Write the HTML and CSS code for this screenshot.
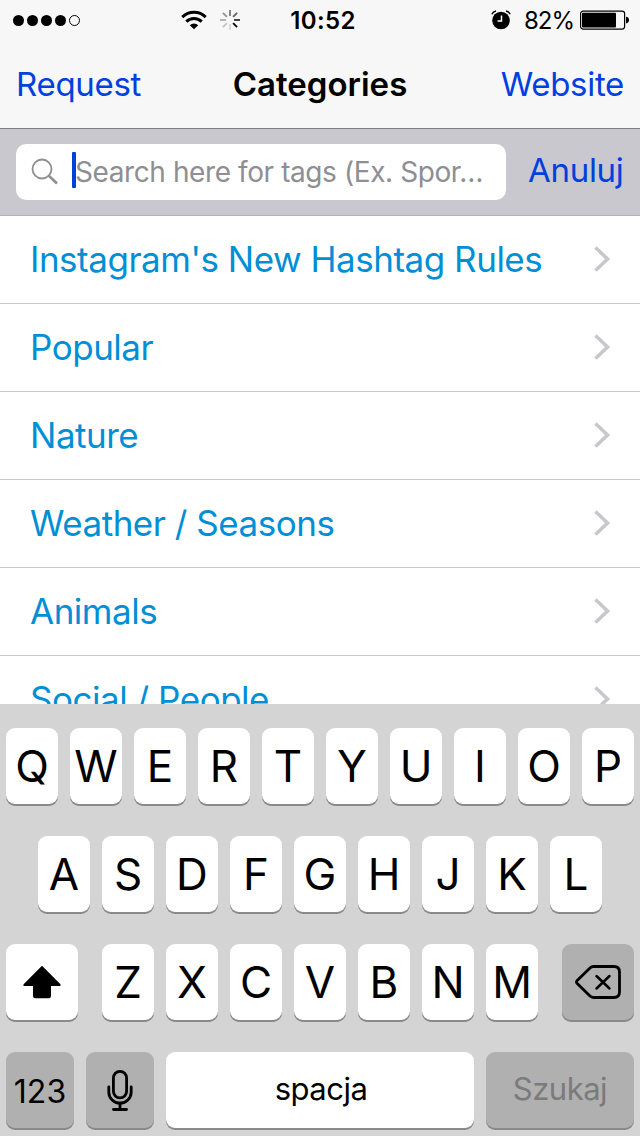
FILE: index.html
```html
<!DOCTYPE html>
<html lang="pl">

<head>
    <meta charset="UTF-8">
    <meta name="viewport" content="width=device-width, initial-scale=1.0">
    <link rel="stylesheet" href="styles.css">
    <title>Categories</title>
</head>

<body>

    <div class="screen">
        <header class="header">
            <div class="status-bar">
                <div class="status-left">
                    <div class="signal">
                        <span class="dot"></span>
                        <span class="dot"></span>
                        <span class="dot"></span>
                        <span class="dot"></span>
                        <span class="dot dot-empty"></span>
                    </div>
                    <svg class="icon-wifi" width="26" height="20" viewBox="0 0 26 20">
                        <g fill="none" stroke="#000" stroke-width="3">
                            <path d="M1.3 7.1a16.6 16.6 0 0 1 23.4 0" />
                            <path d="M5.3 11.6a11 11 0 0 1 15.4 0" />
                        </g>
                        <path d="M8.8 15.3a6 6 0 0 1 8.4 0L13 19.3z" />
                    </svg>
                    <svg class="icon-spinner" width="20" height="20" viewBox="0 0 20 20" stroke="#000" stroke-width="1.8">
                        <path d="M10 0v6" opacity=".5" />
                        <path d="M17.1 2.9l-4 4" opacity=".6" />
                        <path d="M20 10h-6" opacity=".8" />
                        <path d="M17.1 17.1l-4-4" />
                        <path d="M10 20v-6" opacity=".12" />
                        <path d="M2.9 17.1l4-4" opacity=".2" />
                        <path d="M0 10h6" opacity=".3" />
                        <path d="M2.9 2.9l4 4" opacity=".4" />
                    </svg>
                </div>
                <div class="time">10:52</div>
                <div class="status-right">
                    <svg class="icon-alarm" width="20" height="20" viewBox="0 0 20 20">
                        <circle cx="10" cy="10.5" r="8.8" />
                        <path d="M.8 4.2Q2 1.6 5 1M19.2 4.2Q18 1.6 15 1" fill="none" stroke="#000" stroke-width="1.4" />
                        <path d="M10.5 5.5v5.5H6.5" fill="none" stroke="#fff" stroke-width="1.5" />
                    </svg>
                    <span class="battery-text">82%</span>
                    <svg class="icon-battery" width="50" height="20" viewBox="0 0 50 20">
                        <rect x=".6" y="1.1" width="44" height="18" rx="2.5" fill="none" stroke="#000" stroke-width="1.2" />
                        <rect x="2" y="2.8" width="34" height="14.8" rx="1" />
                        <path d="M46 6.8q3 .3 3 3.3t-3 3.3z" />
                    </svg>
                </div>
            </div>
            <div class="nav-bar">
                <a class="nav-link nav-request">Request</a>
                <h1 class="nav-title">Categories</h1>
                <a class="nav-link nav-website">Website</a>
            </div>
        </header>

        <div class="search-bar">
            <div class="search-field">
                <svg class="icon-search" width="28" height="28" viewBox="0 0 28 28" fill="none" stroke="#8e8e93">
                    <circle cx="11" cy="11" r="9.5" stroke-width="1.8" />
                    <path d="M17.8 17.8l8.2 7.7" stroke-width="2.6" />
                </svg>
                <span class="cursor"></span>
                <span class="placeholder">Search here for tags (Ex. Spor…</span>
            </div>
            <a class="cancel">Anuluj</a>
        </div>

        <ul class="categories">
            <li class="category">
                <span class="category-name">Instagram's New Hashtag Rules</span>
                <svg class="chevron" width="18" height="28" viewBox="0 0 18 28"><path d="M2.5 2.5L14.5 14l-12 11.5" /></svg>
            </li>
            <li class="category">
                <span class="category-name">Popular</span>
                <svg class="chevron" width="18" height="28" viewBox="0 0 18 28"><path d="M2.5 2.5L14.5 14l-12 11.5" /></svg>
            </li>
            <li class="category">
                <span class="category-name">Nature</span>
                <svg class="chevron" width="18" height="28" viewBox="0 0 18 28"><path d="M2.5 2.5L14.5 14l-12 11.5" /></svg>
            </li>
            <li class="category">
                <span class="category-name">Weather / Seasons</span>
                <svg class="chevron" width="18" height="28" viewBox="0 0 18 28"><path d="M2.5 2.5L14.5 14l-12 11.5" /></svg>
            </li>
            <li class="category">
                <span class="category-name">Animals</span>
                <svg class="chevron" width="18" height="28" viewBox="0 0 18 28"><path d="M2.5 2.5L14.5 14l-12 11.5" /></svg>
            </li>
            <li class="category">
                <span class="category-name">Social / People</span>
                <svg class="chevron" width="18" height="28" viewBox="0 0 18 28"><path d="M2.5 2.5L14.5 14l-12 11.5" /></svg>
            </li>
        </ul>

        <div class="keyboard">
            <div class="key-row">
                <div class="key">Q</div>
                <div class="key">W</div>
                <div class="key">E</div>
                <div class="key">R</div>
                <div class="key">T</div>
                <div class="key">Y</div>
                <div class="key">U</div>
                <div class="key">I</div>
                <div class="key">O</div>
                <div class="key">P</div>
            </div>
            <div class="key-row">
                <div class="key">A</div>
                <div class="key">S</div>
                <div class="key">D</div>
                <div class="key">F</div>
                <div class="key">G</div>
                <div class="key">H</div>
                <div class="key">J</div>
                <div class="key">K</div>
                <div class="key">L</div>
            </div>
            <div class="key-row">
                <div class="key key-shift">
                    <svg width="38" height="34" viewBox="0 0 38 34">
                        <path d="M19 .8L37.2 19q1.2 2-1 2H28v10q0 2.2-2.2 2.2H12.2Q10 33.2 10 31V21H1.8q-2.2 0-1-2z" />
                    </svg>
                </div>
                <div class="key">Z</div>
                <div class="key">X</div>
                <div class="key">C</div>
                <div class="key">V</div>
                <div class="key">B</div>
                <div class="key">N</div>
                <div class="key">M</div>
                <div class="key key-dark key-delete">
                    <svg width="46" height="34" viewBox="0 0 46 34" fill="none" stroke="#000" stroke-linecap="round" stroke-linejoin="round">
                        <path d="M18.5 1.5H39Q44.5 1.5 44.5 7v20q0 5.500-5.500 5.500H18.5q-2 0-3.500-1.400L2.200 18.600q-1.400-1.600 0-3.200L15 2.900q1.500-1.400 3.500-1.400z" stroke-width="2.8" />
                        <path d="M21.500 11l13 12.500M34.500 11l-13 12.500" stroke-width="2.5" />
                    </svg>
                </div>
            </div>
            <div class="key-row">
                <div class="key key-dark key-small key-numbers">123</div>
                <div class="key key-dark key-small">
                    <svg width="26" height="42" viewBox="0 0 26 42" fill="none" stroke="#000" stroke-width="2.8" stroke-linecap="round">
                        <rect x="6.4" y="2.4" width="13.2" height="26.5" rx="6.6" />
                        <path d="M1.800 18v5a11.200 11.200 0 0 0 22.400 0v-5M13 34v6M6.500 40.500h13" />
                    </svg>
                </div>
                <div class="key key-space">spacja</div>
                <div class="key key-dark key-search">Szukaj</div>
            </div>
        </div>
    </div>

</body>

</html>
```
FILE: styles.css
```css
* {
    box-sizing: border-box;
}

body {
    margin: 0;
    font-family: Inter, "Liberation Sans", sans-serif;
    color: #000;
    background-color: #fff;
}

.screen {
    display: flex;
    flex-direction: column;
    width: 640px;
    height: 1136px;
    overflow: hidden;
}

/* Status bar + nav */
.header {
    height: 129px;
    background-color: #f7f7f7;
    border-bottom: 1px solid #7f7f83;
}

.status-bar {
    display: grid;
    grid-template-columns: 1fr auto 1fr;
    align-items: center;
    height: 40px;
    padding: 0 10px 0 13px;
}

.status-left,
.status-right,
.signal {
    display: flex;
    align-items: center;
}

.status-right {
    justify-content: flex-end;
}

.signal {
    gap: 3px;
}

.dot {
    width: 11px;
    height: 11px;
    border-radius: 50%;
    background-color: #000;
}

.dot-empty {
    background-color: transparent;
    border: 1px solid #000;
}

.icon-wifi {
    margin-left: 101px;
}

.icon-spinner {
    margin-left: 13px;
}

.time {
    padding: 1px 0 0 3px;
    font-size: 24px;
    font-weight: 600;
    letter-spacing: 0.4px;
}

.battery-text {
    margin: 0 6px 0 13px;
    padding-top: 1px;
    font-size: 24px;
    letter-spacing: -1px;
}

.nav-bar {
    display: grid;
    grid-template-columns: 1fr auto 1fr;
    align-items: center;
    height: 88px;
    padding: 0 16px;
}

.nav-link,
.cancel {
    font-size: 33px;
    letter-spacing: -0.3px;
    color: #0040dd;
}

.nav-website {
    text-align: right;
}

.nav-title {
    margin: 0;
    font-size: 33px;
    font-weight: 600;
}

/* Search */
.search-bar {
    display: flex;
    align-items: center;
    height: 87px;
    padding: 0 16px;
    background-color: #c9c8ce;
    border-bottom: 1px solid #b2b2b7;
}

.search-field {
    display: flex;
    flex: none;
    align-items: center;
    width: 490px;
    height: 56px;
    padding-left: 15px;
    background-color: #fff;
    border-radius: 10px;
}

.cursor {
    width: 4px;
    height: 36px;
    margin: 0 -1px 4px 13px;
    border-radius: 1px;
    background-color: #0040dd;
}

.placeholder {
    padding-bottom: 1px;
    font-size: 28px;
    letter-spacing: -0.41px;
    color: #8e8e93;
    white-space: nowrap;
}

.cancel {
    margin-left: 22px;
    padding-bottom: 4px;
}

/* List */
.categories {
    flex: none;
    height: 488px;
    margin: 0;
    padding: 0;
    overflow: hidden;
    list-style: none;
}

.category {
    display: flex;
    align-items: center;
    justify-content: space-between;
    height: 88px;
    padding: 0 29px 2px 30px;
    border-bottom: 1px solid #c8c7cc;
}

.category-name {
    font-size: 35px;
    letter-spacing: -0.48px;
    color: #008fd5;
    white-space: nowrap;
}

.chevron {
    fill: none;
    stroke: #c7c7cc;
    stroke-width: 3.6;
}

/* Keyboard */
.keyboard {
    display: flex;
    flex-direction: column;
    gap: 32px;
    flex: none;
    height: 432px;
    padding: 24px 6px 0;
    background-color: #d4d4d4;
}

.key-row {
    display: flex;
    justify-content: center;
    gap: 12px;
}

.key {
    display: flex;
    align-items: center;
    justify-content: center;
    width: 52px;
    height: 76px;
    border-radius: 9px;
    background-color: #fff;
    box-shadow: 0 2px 0 #8a8a8a;
    font-size: 44px;
}

.key-dark {
    background-color: #b0b0b0;
}

.key-shift {
    width: 72px;
    margin-right: 12px;
}

.key-delete {
    width: 72px;
    margin-left: 12px;
}

.key-small {
    width: 68px;
}

.key-numbers {
    padding-top: 2px;
    font-size: 32px;
}

.key-space {
    width: 308px;
    padding: 0 0 4px 2px;
    font-size: 31px;
    letter-spacing: -0.5px;
}

.key-search {
    width: 148px;
    padding-bottom: 4px;
    font-size: 31px;
    letter-spacing: -0.5px;
    color: #7b7b7b;
}
```
